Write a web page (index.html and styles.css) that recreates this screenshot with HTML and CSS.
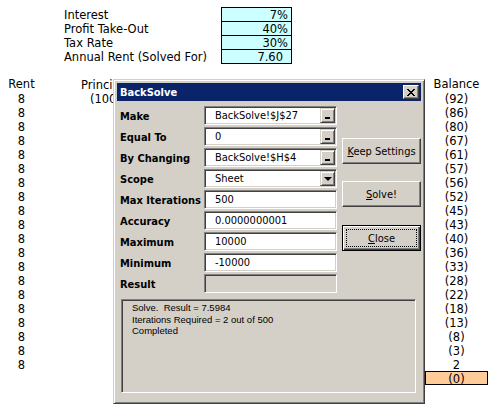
FILE: index.html
```html
<!DOCTYPE html>
<html>
<head>
<meta charset="utf-8">
<link rel="stylesheet" href="styles.css">
</head>
<body>
<div class="sheet">
  <div class="params">
    <div class="prow"><span class="plabel">Interest</span><span class="pval">7%</span></div>
    <div class="prow"><span class="plabel">Profit Take-Out</span><span class="pval">40%</span></div>
    <div class="prow"><span class="plabel">Tax Rate</span><span class="pval">30%</span></div>
    <div class="prow"><span class="plabel">Annual Rent (Solved For)</span><span class="pval last fmt">7.60</span></div>
  </div>
  <div class="grid">
    <div class="rent hb">Rent</div><div class="prin hdr">Principal</div><div class="mid"></div><div class="bal hb">Balance</div>
    <div class="rent">8</div><div class="prin val">(100,000)</div><div class="mid"></div><div class="bal">(92)</div>
    <div class="rent">8</div><div class="prin"></div><div class="mid"></div><div class="bal">(86)</div>
    <div class="rent">8</div><div class="prin"></div><div class="mid"></div><div class="bal">(80)</div>
    <div class="rent">8</div><div class="prin"></div><div class="mid"></div><div class="bal">(67)</div>
    <div class="rent">8</div><div class="prin"></div><div class="mid"></div><div class="bal">(61)</div>
    <div class="rent">8</div><div class="prin"></div><div class="mid"></div><div class="bal">(57)</div>
    <div class="rent">8</div><div class="prin"></div><div class="mid"></div><div class="bal">(56)</div>
    <div class="rent">8</div><div class="prin"></div><div class="mid"></div><div class="bal">(52)</div>
    <div class="rent">8</div><div class="prin"></div><div class="mid"></div><div class="bal">(45)</div>
    <div class="rent">8</div><div class="prin"></div><div class="mid"></div><div class="bal">(43)</div>
    <div class="rent">8</div><div class="prin"></div><div class="mid"></div><div class="bal">(40)</div>
    <div class="rent">8</div><div class="prin"></div><div class="mid"></div><div class="bal">(36)</div>
    <div class="rent">8</div><div class="prin"></div><div class="mid"></div><div class="bal">(33)</div>
    <div class="rent">8</div><div class="prin"></div><div class="mid"></div><div class="bal">(28)</div>
    <div class="rent">8</div><div class="prin"></div><div class="mid"></div><div class="bal">(22)</div>
    <div class="rent">8</div><div class="prin"></div><div class="mid"></div><div class="bal">(18)</div>
    <div class="rent">8</div><div class="prin"></div><div class="mid"></div><div class="bal">(13)</div>
    <div class="rent">8</div><div class="prin"></div><div class="mid"></div><div class="bal">(8)</div>
    <div class="rent">8</div><div class="prin"></div><div class="mid"></div><div class="bal">(3)</div>
    <div class="rent">8</div><div class="prin"></div><div class="mid"></div><div class="bal">2</div>
    <div class="rent"></div><div class="prin"></div><div class="mid"></div><div class="bal total">(0)</div>
  </div>
</div>

<div class="dlg">
  <div class="title">
    <span class="title-text">BackSolve</span>
    <span class="xbtn">
      <svg width="8" height="7" viewBox="0 0 8 7" shape-rendering="crispEdges">
        <rect x="0" y="0" width="2" height="1"/><rect x="6" y="0" width="2" height="1"/>
        <rect x="1" y="1" width="2" height="1"/><rect x="5" y="1" width="2" height="1"/>
        <rect x="2" y="2" width="4" height="1"/>
        <rect x="3" y="3" width="2" height="1"/>
        <rect x="2" y="4" width="4" height="1"/>
        <rect x="1" y="5" width="2" height="1"/><rect x="5" y="5" width="2" height="1"/>
        <rect x="0" y="6" width="2" height="1"/><rect x="6" y="6" width="2" height="1"/>
      </svg>
    </span>
  </div>
  <div class="body">
    <div class="form">
      <div class="lbl">Make</div>
      <div class="field"><span class="ftext">BackSolve!$J$27</span><span class="mini"><span class="under"></span></span></div>
      <div class="lbl">Equal To</div>
      <div class="field"><span class="ftext">0</span><span class="mini"><span class="under"></span></span></div>
      <div class="lbl">By Changing</div>
      <div class="field"><span class="ftext">BackSolve!$H$4</span><span class="mini"><span class="under"></span></span></div>
      <div class="lbl">Scope</div>
      <div class="field"><span class="ftext">Sheet</span><span class="mini drop"><span class="arrow"></span></span></div>
      <div class="lbl">Max Iterations</div>
      <div class="field"><span class="ftext">500</span></div>
      <div class="lbl">Accuracy</div>
      <div class="field"><span class="ftext">0.0000000001</span></div>
      <div class="lbl">Maximum</div>
      <div class="field"><span class="ftext">10000</span></div>
      <div class="lbl">Minimum</div>
      <div class="field"><span class="ftext">-10000</span></div>
      <div class="lbl">Result</div>
      <div class="field disabled"></div>
    </div>
    <div class="side">
      <div class="btn keep"><span><u>K</u>eep Settings</span></div>
      <div class="btn solve"><span><u>S</u>olve!</span></div>
      <div class="btn close default"><span><u>C</u>lose</span></div>
    </div>
  </div>
  <div class="msg">
    <div>Solve.&nbsp; Result = 7.5984</div>
    <div>Iterations Required = 2 out of 500</div>
    <div>Completed</div>
  </div>
</div>
</body>
</html>
```

FILE: styles.css
```css
html, body {
  margin: 0;
  padding: 0;
  background: #ffffff;
}

body {
  width: 492px;
  height: 407px;
  overflow: hidden;
  position: relative;
  font-family: "DejaVu Sans", Verdana, sans-serif;
  font-size: 11.5px;
  color: #000;
}

.sheet {
  padding-top: 7px;
}

.params {
  display: flex;
  flex-direction: column;
}

.prow {
  display: flex;
  height: 14px;
  line-height: 14px;
}

.plabel {
  width: 221px;
  padding-left: 64px;
  padding-top: 1px;
  box-sizing: border-box;
  white-space: nowrap;
}

.pval {
  box-sizing: border-box;
  width: 71px;
  height: 14px;
  background: #ccffff;
  border: 1px solid #000;
  border-bottom: none;
  text-align: right;
  padding-right: 3px;
  line-height: 14px;
}

.pval.last {
  height: 15px;
  border-bottom: 1px solid #000;
}

.pval.fmt {
  padding-right: 8px;
}

.grid {
  margin-top: 14px;
  display: grid;
  grid-template-columns: 43px 70px 312px 63px;
  grid-auto-rows: 14px;
  line-height: 14px;
}

.grid > div {
  white-space: nowrap;
  overflow: hidden;
  padding-top: 1px;
  box-sizing: border-box;
}

.rent, .bal {
  text-align: center;
}

.grid > .hb {
  padding-top: 0;
}

.prin.hdr {
  padding-left: 38px;
}

.prin.val {
  padding-left: 47px;
}

.bal.total {
  background: #ffcc99;
  border: 1px solid #000;
  line-height: 12px;
}

/* Dialog */
.dlg {
  position: absolute;
  left: 113px;
  top: 79px;
  width: 312px;
  height: 325px;
  box-sizing: border-box;
  background: #d4d0c8;
  border: 1px solid;
  border-color: #d4d0c8 #404040 #404040 #d4d0c8;
  box-shadow: inset 1px 1px #ffffff, inset -1px -1px #808080;
  padding: 3px;
  font-family: "DejaVu Sans Condensed", "DejaVu Sans", Tahoma, sans-serif;
  font-stretch: condensed;
  font-size: 11px;
}

.title {
  height: 18px;
  background: #0a246a;
  color: #fff;
  display: flex;
  align-items: center;
  justify-content: space-between;
  padding: 0 2px 0 3px;
}

.title-text {
  font-weight: bold;
  font-size: 11px;
}

.xbtn {
  box-sizing: border-box;
  width: 16px;
  height: 14px;
  background: #d4d0c8;
  border: 1px solid;
  border-color: #ffffff #404040 #404040 #ffffff;
  box-shadow: inset -1px -1px #808080;
  display: flex;
  align-items: center;
  justify-content: center;
  padding-right: 1px;
}

.xbtn svg {
  display: block;
  fill: #000;
}

.body {
  display: flex;
  margin-top: 5px;
  padding-left: 3px;
}

.form {
  display: grid;
  grid-template-columns: 84px 133px;
  grid-auto-rows: 19px;
  row-gap: 2px;
}

.lbl {
  font-weight: bold;
  display: flex;
  align-items: center;
  padding-top: 2px;
  white-space: nowrap;
}

.field {
  box-sizing: border-box;
  height: 19px;
  background: #ffffff;
  border: 1px solid;
  border-color: #808080 #ffffff #ffffff #808080;
  box-shadow: inset 1px 1px #404040, inset -1px -1px #d4d0c8;
  display: flex;
  align-items: center;
}

.field.disabled {
  background: #d4d0c8;
}

.ftext {
  padding-left: 10px;
  white-space: nowrap;
  flex: 1;
}

.mini {
  box-sizing: border-box;
  width: 15px;
  height: 15px;
  margin: 1px 1px 1px auto;
  background: #d4d0c8;
  border: 1px solid;
  border-color: #d4d0c8 #404040 #404040 #d4d0c8;
  box-shadow: inset 1px 1px #ffffff, inset -1px -1px #808080;
  display: flex;
  align-items: flex-end;
  justify-content: center;
  padding-bottom: 3px;
}

.under {
  width: 5px;
  height: 2px;
  background: #000;
}

.mini.drop {
  align-items: center;
  padding-bottom: 0;
}

.arrow {
  width: 0;
  height: 0;
  border-left: 4px solid transparent;
  border-right: 4px solid transparent;
  border-top: 4px solid #000;
  margin-top: 1px;
}

.side {
  display: flex;
  flex-direction: column;
  margin-left: 5px;
  padding-top: 32px;
}

.btn {
  box-sizing: border-box;
  width: 79px;
  height: 26px;
  background: #d4d0c8;
  border: 1px solid;
  border-color: #ffffff #404040 #404040 #ffffff;
  box-shadow: inset -1px -1px #808080;
  display: flex;
  align-items: center;
  justify-content: center;
  white-space: nowrap;
}

.btn.solve {
  margin-top: 17px;
}

.btn.close {
  margin-top: 18px;
}

.btn.default {
  position: relative;
  border-color: #000;
  box-shadow: inset 1px 1px #ffffff, inset -1px -1px #404040, inset -2px -2px #808080;
}

.btn.default::after {
  content: "";
  position: absolute;
  left: 3px;
  top: 3px;
  right: 3px;
  bottom: 3px;
  border: 1px dotted #000;
}

.msg {
  box-sizing: border-box;
  height: 94px;
  margin: 6px 5px 0 4px;
  border: 1px solid;
  border-color: #808080 #ffffff #ffffff #808080;
  box-shadow: inset 1px 1px #404040, inset -1px -1px #d4d0c8;
  padding: 2px 0 0 10px;
  font-family: "Liberation Sans", Arial, sans-serif;
  font-stretch: normal;
  font-size: 9.5px;
  line-height: 11.7px;
}
```
